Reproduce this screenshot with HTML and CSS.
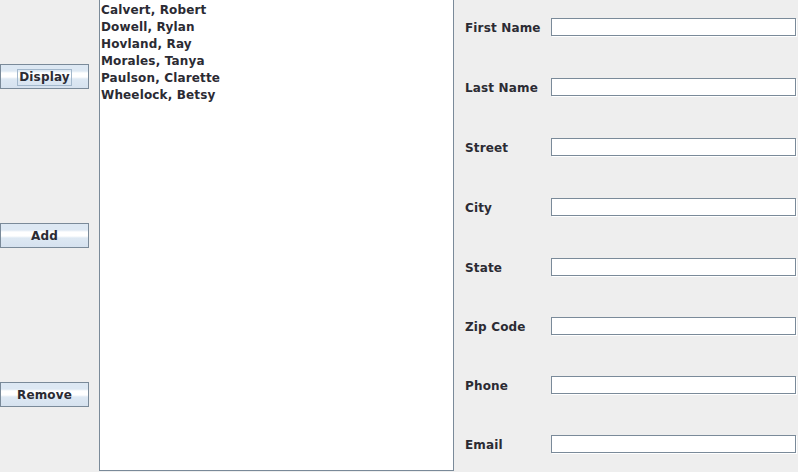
FILE: index.html
```html
<!DOCTYPE html>
<html>
<head>
<meta charset="utf-8">
<link rel="stylesheet" href="styles.css">
</head>
<body>
<div class="frame">
  <div class="buttons">
    <div class="btn"><span class="focus">Display</span></div>
    <div class="btn"><span class="label">Add</span></div>
    <div class="btn"><span class="label">Remove</span></div>
  </div>
  <div class="list">
    <div class="item">Calvert, Robert</div>
    <div class="item">Dowell, Rylan</div>
    <div class="item">Hovland, Ray</div>
    <div class="item">Morales, Tanya</div>
    <div class="item">Paulson, Clarette</div>
    <div class="item">Wheelock, Betsy</div>
  </div>
  <div class="form">
    <div class="row"><span class="flabel">First Name</span><span class="field"></span></div>
    <div class="row"><span class="flabel">Last Name</span><span class="field"></span></div>
    <div class="row"><span class="flabel">Street</span><span class="field"></span></div>
    <div class="row"><span class="flabel">City</span><span class="field"></span></div>
    <div class="row"><span class="flabel">State</span><span class="field"></span></div>
    <div class="row"><span class="flabel">Zip Code</span><span class="field"></span></div>
    <div class="row"><span class="flabel">Phone</span><span class="field"></span></div>
    <div class="row"><span class="flabel">Email</span><span class="field"></span></div>
  </div>
</div>
</body>
</html>
```
FILE: styles.css
```css
html, body {
  margin: 0;
  padding: 0;
  background: #eeeeee;
}
body {
  width: 798px;
  height: 472px;
  overflow: hidden;
  font-family: "DejaVu Sans", "Liberation Sans", sans-serif;
  font-weight: bold;
  font-size: 12px;
  letter-spacing: 0.15px;
  color: #2b2b33;
}
.frame {
  display: flex;
  width: 798px;
  height: 472px;
}
.buttons {
  width: 89px;
  flex: none;
  display: flex;
  flex-direction: column;
  padding-top: 64px;
  gap: 134px;
  margin-right: 10px;
}
.btn {
  box-sizing: border-box;
  width: 89px;
  height: 25px;
  border: 1px solid #7a8a99;
  background: linear-gradient(to bottom, #dde8f3 0px, #dde8f3 6px, #ffffff 8px, #ffffff 12px, #dde8f3 14px, #d6e2ef 23px);
  display: flex;
  align-items: center;
  justify-content: center;
  padding-top: 2px;
}
.focus {
  border: 1px solid #a3b8cc;
  padding: 0 1px;
  line-height: 15px;
}
.label {
  line-height: 17px;
}
.list {
  box-sizing: border-box;
  width: 355px;
  height: 471px;
  flex: none;
  background: #ffffff;
  border: 1px solid #7a8a99;
  border-top: 0;
  padding-left: 1px;
  padding-top: 2px;
}
.item {
  height: 17px;
  line-height: 17px;
  white-space: nowrap;
}
.form {
  flex: 1;
  display: flex;
  flex-direction: column;
  padding-top: 18px;
  padding-left: 11px;
}
.row {
  display: flex;
  align-items: center;
  height: 18px;
}
.row + .row {
  margin-top: 42px;
}
.row:nth-child(n+6) {
  margin-top: 41px;
}
.flabel {
  width: 86px;
  flex: none;
  line-height: 18px;
  padding-top: 2px;
}
.field {
  box-sizing: border-box;
  width: 245px;
  height: 18px;
  border: 1px solid #7a8a99;
  background: #ffffff;
  box-shadow: 1px 1px 0 #ffffff;
}
```
